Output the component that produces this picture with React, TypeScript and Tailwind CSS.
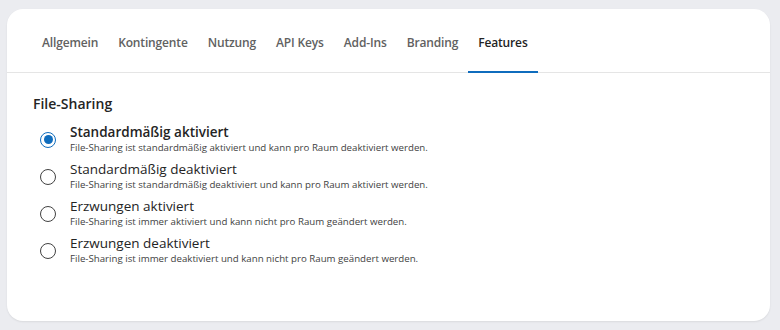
import React, { useState } from 'react';

const tabs = ['Allgemein', 'Kontingente', 'Nutzung', 'API Keys', 'Add-Ins', 'Branding', 'Features'];

const options = [
  {
    id: 'default-on',
    label: 'Standardmäßig aktiviert',
    description: 'File-Sharing ist standardmäßig aktiviert und kann pro Raum deaktiviert werden.',
  },
  {
    id: 'default-off',
    label: 'Standardmäßig deaktiviert',
    description: 'File-Sharing ist standardmäßig deaktiviert und kann pro Raum aktiviert werden.',
  },
  {
    id: 'forced-on',
    label: 'Erzwungen aktiviert',
    description: 'File-Sharing ist immer aktiviert und kann nicht pro Raum geändert werden.',
  },
  {
    id: 'forced-off',
    label: 'Erzwungen deaktiviert',
    description: 'File-Sharing ist immer deaktiviert und kann nicht pro Raum geändert werden.',
  },
];

const App: React.FC = () => {
  const [active, setActive] = useState('Features');
  const [selected, setSelected] = useState('default-on');

  return (
    <div className="min-h-[330px] bg-[#ebecf0] px-[7px] pt-[9px] pb-[9px] font-['Open_Sans',sans-serif]">
      <div className="bg-white rounded-2xl shadow-[0_1px_2px_rgba(0,0,0,0.08)] h-[312px] w-[763px]">
        {/* Tabs */}
        <div className="flex px-[25px] border-b border-[#e5e5e5] h-[64px]">
          {tabs.map((tab) => {
            const isActive = tab === active;
            return (
              <button
                key={tab}
                onClick={() => setActive(tab)}
                className={`relative px-[10px] pt-[4px] text-[12px] tracking-[-0.15px] font-semibold cursor-pointer ${
                  isActive ? 'text-[#242424]' : 'text-[#616161]'
                }`}
              >
                {tab}
                {isActive && (
                  <span className="absolute left-0 right-0 -bottom-px h-[2px] bg-[#0f6cbd]" />
                )}
              </button>
            );
          })}
        </div>

        {/* Content */}
        <div className="px-[26px] pt-[20px]">
          <h3 className="text-[14px] font-semibold text-[#242424] mb-[10px]">File-Sharing</h3>
          <div className="flex flex-col gap-[6px] pl-[7px]">
            {options.map((opt) => {
              const isSelected = opt.id === selected;
              return (
                <label key={opt.id} className="flex items-center gap-[14px] cursor-pointer">
                  <span
                    onClick={() => setSelected(opt.id)}
                    className={`w-4 h-4 rounded-full border-[1.5px] flex items-center justify-center shrink-0 ${
                      isSelected ? 'border-[#0f6cbd]' : 'border-[#424242]'
                    }`}
                  >
                    {isSelected && <span className="w-[9px] h-[9px] rounded-full bg-[#0f6cbd]" />}
                  </span>
                  <span className="flex flex-col">
                    <span
                      className={`text-[13.5px] leading-[17px] text-[#242424] ${
                        isSelected ? 'font-semibold' : ''
                      }`}
                    >
                      {opt.label}
                    </span>
                    <span className="text-[9.7px] leading-[14px] text-[#424242]">{opt.description}</span>
                  </span>
                </label>
              );
            })}
          </div>
        </div>
      </div>
    </div>
  );
};

export default App;
